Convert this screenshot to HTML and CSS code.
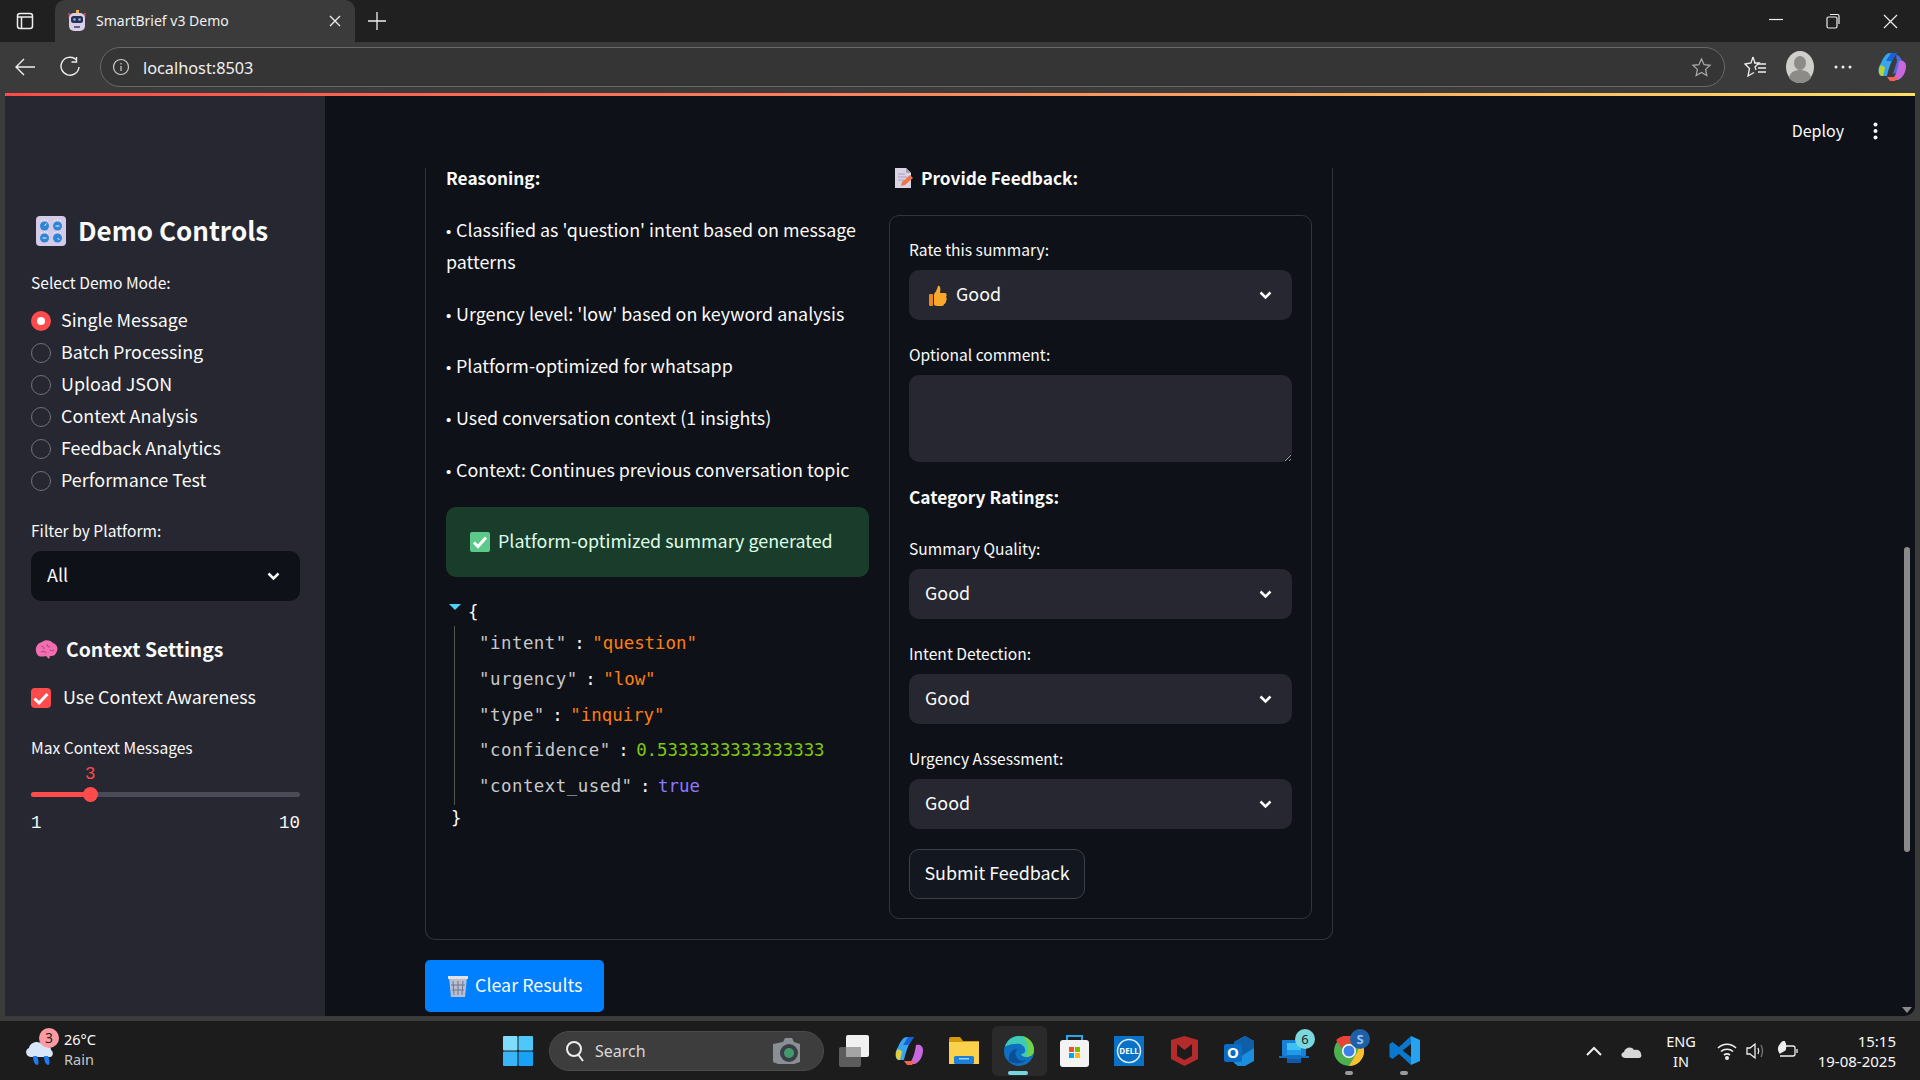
FILE: index.html
```html
<!doctype html>
<html lang="en">
<head>
    <meta charset="UTF-8">
    <title>SmartBrief v3 Demo</title>
    <link rel="stylesheet" href="styles.css">
</head>
<body>

<!-- browser tabs -->
<div class="tabstrip">
    <svg class="ic-panel" width="20" height="20" viewBox="0 0 20 20" fill="none" stroke="#eee" stroke-width="1.5"><rect x="2.5" y="2.5" width="15" height="15" rx="2.5"/><path d="M2.5 6h15M6.500 6v11.500"/></svg>
    <div class="tab">
        <svg width="20" height="22" viewBox="0 0 20 22"><path d="M9 0h3v3H9z" fill="#f2b632"/><path d="M2 3l1 6M18 3l-1 6" stroke="#c2455c" stroke-width="2"/><rect x="2" y="3" width="16" height="18" rx="5" fill="#d9cfe6"/><rect x="4" y="6" width="12" height="7" rx="2.500" fill="#2e2c55"/><circle cx="7.500" cy="9.500" r="1.300" fill="#63c7f5"/><circle cx="12.500" cy="9.500" r="1.300" fill="#63c7f5"/><rect x="7" y="16" width="6" height="2" fill="#6a5f8c"/></svg>
        <span class="tab-title">SmartBrief v3 Demo</span>
        <svg class="tab-close" width="12" height="12" viewBox="0 0 12 12" stroke="#eee" stroke-width="1.300"><path d="M1 1l10 10M11 1L1 11"/></svg>
    </div>
    <svg class="ic-plus" width="18" height="18" viewBox="0 0 18 18" stroke="#eee" stroke-width="1.300"><path d="M9 0v18M0 9h18"/></svg>
    <div class="win-btns">
        <svg width="14" height="14" viewBox="0 0 14 14" stroke="#eee" stroke-width="1.200"><path d="M0 5.500h14"/></svg>
        <svg width="14" height="16" viewBox="0 0 14 16" fill="none" stroke="#eee" stroke-width="1.200"><rect x="1" y="4" width="10" height="11" rx="1.500"/><path d="M4 1.500h7.500a1.500 1.500 0 0 1 1.500 1.500v8"/></svg>
        <svg width="15" height="15" viewBox="0 0 15 15" stroke="#eee" stroke-width="1.200"><path d="M1 1l13 13M14 1L1 14"/></svg>
    </div>
</div>

<!-- address bar -->
<div class="toolbar">
    <svg class="ic-back" width="22" height="20" viewBox="0 0 22 20" fill="none" stroke="#eee" stroke-width="1.400"><path d="M21 10H2M10 2l-8 8 8 8"/></svg>
    <svg class="ic-reload" width="22" height="22" viewBox="0 0 22 22" fill="none" stroke="#eee" stroke-width="1.400"><path d="M17 3.500A9 9 0 1 0 20 11M17.500 1v5h-5"/></svg>
    <div class="address">
        <svg width="18" height="18" viewBox="0 0 18 18" fill="none" stroke="#ccc" stroke-width="1.200"><circle cx="9" cy="9" r="7.500"/><path d="M9 8v5M9 5v1.500"/></svg>
        <span class="url">localhost:8503</span>
        <svg class="ic-star" width="21" height="21" viewBox="0 0 22 22" fill="none" stroke="#aaa" stroke-width="1.300"><path d="M11 2l2.700 6 6.300.700-4.700 4.300 1.300 6.500L11 16.200 5.400 19.500l1.300-6.500L2 8.700 8.300 8z"/></svg>
    </div>
    <div class="tool-icons">
        <svg width="22" height="24" viewBox="0 0 22 24" fill="none" stroke="#eee" stroke-width="1.300"><path d="M9 2l2 6h-1 5l-4 4 1 3M9 2L7 8 1 9l4.500 4.500L4 21l6-3.500"/><path d="M14 9h8M14 13h8M14 17h8"/></svg>
        <svg width="28" height="32" viewBox="0 0 28 32"><ellipse cx="14" cy="16" rx="14" ry="16" fill="#cfcec9"/><ellipse cx="14" cy="12" rx="6" ry="7" fill="#8c8b88"/><path d="M3 27c1-6 6-8 11-8s10 2 11 8c-3 4-7 5-11 5s-8-1-11-5z" fill="#8c8b88"/></svg>
        <svg width="18" height="4" viewBox="0 0 18 4" fill="#eee"><circle cx="2" cy="2" r="1.500"/><circle cx="9" cy="2" r="1.500"/><circle cx="16" cy="2" r="1.500"/></svg>
        <svg class="tool-copilot" width="28" height="30" viewBox="0 0 28 30"><path d="M12 1h7c-4 3-8 14-10 23H4C0 24-1 17 3 11c2-5 5-10 9-10z" fill="#38a5ee"/><path d="M2 14c2-1 4 0 5 2l-2 8H4c-3 0-4-6-2-10z" fill="#b8d433"/><path d="M13 1h6l-5 8H8z" fill="#1763d6"/><path d="M18 3c3 0 5 3 6 6l-4 11-5 2 4-13z" fill="#4a6de0"/><path d="M21 9c4-1 7 1 7 5 0 6-3 12-8 14h-6c4-4 6-12 7-19z" fill="#c768dd"/><path d="M9 25h11l-3 4h-5z" fill="#f2644e"/></svg>
    </div>
</div>

<div class="page">
    <div class="sidebar">
        <h2 class="side-title">
            <svg width="30" height="30" viewBox="0 0 30 30"><rect width="30" height="30" rx="4" fill="#d5cbe8"/><circle cx="8.500" cy="10" r="4.500" fill="#2f86d6"/><circle cx="21.500" cy="10" r="4.500" fill="#2f86d6"/><circle cx="8.500" cy="22" r="4.500" fill="#2f86d6"/><circle cx="21.500" cy="22" r="4.500" fill="#2f86d6"/><path d="M8.500 10l2-2.500M19.500 10h4M6.500 22h4M21.500 22l2 2M5 4l1 1M8.500 3v1.500M12 4l-1 1M18 4l1 1M21.500 3v1.500M25 4l-1 1M5 16l1 1M8.500 15v1.500M12 16l-1 1M18 16l1 1M21.500 15v1.500M25 16l-1 1" stroke="#e8f3ff" stroke-width="1"/></svg>
            <span class="txt-s">Demo Controls</span>
        </h2>
        <div class="side-label first">Select Demo Mode:</div>
        <div class="radios">
            <div class="radio on"><i></i><span class="txt">Single Message</span></div>
            <div class="radio"><i></i><span class="txt">Batch Processing</span></div>
            <div class="radio"><i></i><span class="txt">Upload JSON</span></div>
            <div class="radio"><i></i><span class="txt">Context Analysis</span></div>
            <div class="radio"><i></i><span class="txt">Feedback Analytics</span></div>
            <div class="radio"><i></i><span class="txt">Performance Test</span></div>
        </div>
        <div class="side-label filter">Filter by Platform:</div>
        <div class="select dark"><span class="txt">All</span>
            <svg class="chev" width="13" height="9" viewBox="0 0 13 9" fill="none" stroke="#fafafa" stroke-width="2.500"><path d="M1.500 1.500l5 5 5-5"/></svg>
        </div>
        <h3 class="side-sub">
            <svg width="23" height="21" viewBox="0 0 23 21"><path d="M2 14C-1 9 2 3 7 2c3-3 9-2 11 1 4 1 6 6 3 10-1 3-4 3-6 3l-1 3-3-3c-4 1-8 1-9-2z" fill="#f06fb0"/><path d="M6 6c2 0 3 1 3 3M12 4c0 2 1 3 3 3M6 12c2-1 4-1 5 1M15 10c1 1 3 1 4 0" fill="none" stroke="#c24a8d" stroke-width="1.200"/></svg>
            <span class="txt">Context Settings</span>
        </h3>
        <div class="check-row">
            <span class="check"><svg width="16" height="13" viewBox="0 0 16 13" fill="none" stroke="#fff" stroke-width="3"><path d="M1.500 6.500l4.500 4.500 8.500-9"/></svg></span>
            <span class="txt">Use Context Awareness</span>
        </div>
        <div class="side-label max">Max Context Messages</div>
        <div class="slider-val">3</div>
        <div class="slider">
            <div class="slider-fill" style="width:59px"></div>
            <div class="slider-thumb"></div>
        </div>
        <div class="slider-ticks"><span>1</span><span>10</span></div>
    </div>

    <div class="main">
        <div class="topbar">
            <span class="deploy">Deploy</span>
            <svg width="5" height="18" viewBox="0 0 5 18" fill="#fafafa"><circle cx="2.500" cy="2.500" r="2"/><circle cx="2.500" cy="9" r="2"/><circle cx="2.500" cy="15.500" r="2"/></svg>
        </div>

        <div class="result-card">
            <div class="col">
                <div class="col-head">Reasoning:</div>
                <p class="first"><span class="bul">•</span> Classified as 'question' intent based on message patterns</p>
                <p><span class="bul">•</span> Urgency level: 'low' based on keyword analysis</p>
                <p><span class="bul">•</span> Platform-optimized for whatsapp</p>
                <p><span class="bul">•</span> Used conversation context (1 insights)</p>
                <p><span class="bul">•</span> Context: Continues previous conversation topic</p>
                <div class="success">
                    <svg width="20" height="20" viewBox="0 0 20 20"><rect width="20" height="20" rx="2" fill="#5cc98a"/><path d="M4 10.500l4 4 8-9" fill="none" stroke="#fff" stroke-width="3"/></svg>
                    <span class="txt">Platform-optimized summary generated</span>
                </div>
                <div class="json">
                    <div class="json-open"><i class="tri"></i><span>{</span></div>
                    <div class="json-rows">
                        <div class="json-row"><span class="k">"intent"</span><span class="c">:</span><span class="s">"question"</span></div>
                        <div class="json-row"><span class="k">"urgency"</span><span class="c">:</span><span class="s">"low"</span></div>
                        <div class="json-row"><span class="k">"type"</span><span class="c">:</span><span class="s">"inquiry"</span></div>
                        <div class="json-row"><span class="k">"confidence"</span><span class="c">:</span><span class="n">0.5333333333333333</span></div>
                        <div class="json-row"><span class="k">"context_used"</span><span class="c">:</span><span class="b">true</span></div>
                    </div>
                    <div class="json-close">}</div>
                </div>
            </div>

            <div class="col">
                <div class="col-head feedback">
                    <svg width="18" height="20" viewBox="0 0 18 20"><path d="M0 0h11l5 5v15H0z" fill="#d9d3e3"/><path d="M11 0v5h5z" fill="#a99fb8"/><path d="M3 6h7M3 9h9M3 12h6" stroke="#a99fb8"/><path d="M6 18l1-4 8-7 3 3-8 7z" fill="#f2744e"/></svg>
                    Provide Feedback:
                </div>
                <div class="feedback-box">
                    <div class="field-label top">Rate this summary:</div>
                    <div class="select">
                        <svg class="thumb" width="18" height="21" viewBox="0 0 18 21"><path d="M5 9c2-2 3-5 4-8 2-1 3 2 2 7h5c2 0 2 3 1 4 1 1 1 3 0 4 0 2-1 3-2 3 0 1-1 2-2 2H8c-2 0-3-1-3-2z" fill="#f7a92c"/><rect y="9" width="4" height="12" rx="1" fill="#e8891c"/></svg>
                        <span class="txt">Good</span>
                        <svg class="chev" width="13" height="9" viewBox="0 0 13 9" fill="none" stroke="#fafafa" stroke-width="2.500"><path d="M1.500 1.500l5 5 5-5"/></svg>
                    </div>
                    <div class="field-label">Optional comment:</div>
                    <textarea class="comment"></textarea>
                    <div class="cat-head">Category Ratings:</div>
                    <div class="field-label cat">Summary Quality:</div>
                    <div class="select"><span class="txt">Good</span>
                        <svg class="chev" width="13" height="9" viewBox="0 0 13 9" fill="none" stroke="#fafafa" stroke-width="2.500"><path d="M1.500 1.500l5 5 5-5"/></svg>
                    </div>
                    <div class="field-label">Intent Detection:</div>
                    <div class="select"><span class="txt">Good</span>
                        <svg class="chev" width="13" height="9" viewBox="0 0 13 9" fill="none" stroke="#fafafa" stroke-width="2.500"><path d="M1.500 1.500l5 5 5-5"/></svg>
                    </div>
                    <div class="field-label">Urgency Assessment:</div>
                    <div class="select"><span class="txt">Good</span>
                        <svg class="chev" width="13" height="9" viewBox="0 0 13 9" fill="none" stroke="#fafafa" stroke-width="2.500"><path d="M1.500 1.500l5 5 5-5"/></svg>
                    </div>
                    <div class="submit">Submit Feedback</div>
                </div>
            </div>
        </div>

        <div class="clear-btn">
            <svg width="20" height="22" viewBox="0 0 20 22"><path d="M1 2h18l-2 20H3z" fill="#b9bfd0"/><path d="M0 1h20v3H0z" fill="#dfe2ea"/><path d="M5 6l1 14M10 6v14M15 6l-1 14M3 10h14M4 15h12" stroke="#6f7690"/></svg>
            <span class="txt">Clear Results</span>
        </div>

        <div class="scrollbar"></div>
        <i class="scroll-down"></i>
    </div>
</div>

<div class="window-edge"></div>

<!-- windows taskbar -->
<div class="taskbar">
    <div class="weather">
        <svg width="30" height="32" viewBox="0 0 30 32"><path d="M6 22c-5 0-7-7-2-9 1-6 9-8 13-4 5-1 9 2 9 6 3 2 2 7-1 7z" fill="#d8e6fa"/><path d="M8 21c0 5 2 9 4 9s2-4 0-9zM19 21c0 5 2 9 4 9s2-4 0-9z" fill="#1f7bf2"/></svg>
        <span class="weather-badge">3</span>
    </div>
    <div class="weather-text"><span>26°C</span><span class="dim">Rain</span></div>

    <svg class="win-logo" width="30" height="30" viewBox="0 0 30 30"><rect width="14.500" height="14.500" rx="1" fill="#7fdcfb"/><rect x="15.500" width="14.500" height="14.500" rx="1" fill="#4fc7f9"/><rect y="15.500" width="14.500" height="14.500" rx="1" fill="#3ab6f8"/><rect x="15.500" y="15.500" width="14.500" height="14.500" rx="1" fill="#17a2f5"/></svg>

    <div class="search">
        <svg width="20" height="22" viewBox="0 0 20 22" fill="none" stroke="#eee" stroke-width="2"><circle cx="9" cy="9" r="7"/><path d="M13.500 15l4.500 6"/></svg>
        <span>Search</span>
        <svg class="search-cam" width="29" height="28" viewBox="0 0 29 28"><path d="M1 7l10-2 2-4h7l2 4 6 2v18l-6 2H6l-5-2z" fill="#8a8f96"/><circle cx="17" cy="16" r="9" fill="#3a3f45"/><circle cx="17" cy="16" r="5" fill="#3f9a6e"/></svg>
    </div>

    <div class="apps">
        <div class="app"><svg width="30" height="32" viewBox="0 0 30 32"><rect y="12" width="22" height="20" rx="2" fill="#5c5c5c"/><rect x="7" width="23" height="22" rx="2" fill="#f1f1f1"/><rect x="7" y="12" width="15" height="10" fill="#a5a5a5"/></svg></div>
        <div class="app"><svg width="28" height="30" viewBox="0 0 28 30"><path d="M12 1h7c-4 3-8 14-10 23H4C0 24-1 17 3 11c2-5 5-10 9-10z" fill="#38a5ee"/><path d="M2 14c2-1 4 0 5 2l-2 8H4c-3 0-4-6-2-10z" fill="#e3cf33"/><path d="M13 1h6l-5 8H8z" fill="#1763d6"/><path d="M21 9c4-1 7 1 7 5 0 6-3 12-8 14h-6c4-4 6-12 7-19z" fill="#c768dd"/><path d="M9 25h11l-3 4h-5z" fill="#f2644e"/></svg></div>
        <div class="app"><svg width="30" height="27" viewBox="0 0 30 27"><path d="M0 2a2 2 0 0 1 2-2h9l3 4h16v5H0z" fill="#d49a0c"/><rect y="5" width="30" height="22" fill="#fbd04a"/><rect x="5" y="19" width="20" height="8" rx="1.500" fill="#1a80d9"/><rect x="10" y="21" width="10" height="1.500" fill="#9fd4fa"/></svg></div>
        <div class="app active">
            <svg width="30" height="30" viewBox="0 0 30 30"><circle cx="15" cy="15" r="15" fill="#0f6fc0"/><path d="M1 11C3 3 10 0 15 0c9 0 15 7 15 14 0 5-4 7-8 7-3 0-5-2-5-3 3 0 5-2 4-5-1-4-5-6-10-5-5 0-9 2-10 3z" fill="#3ecbb4"/><path d="M18 0c7 1 12 7 12 14 0 5-4 7-8 7 3-5 3-15-4-21z" fill="#6fd24a"/><path d="M5 25c6 4 15 2 17-1-5 2-9 0-10-4-1-2-1-5 2-7-6 0-10 4-9 12z" fill="#0b4f96"/></svg>
            <i class="app-bar"></i>
        </div>
        <div class="app"><svg width="29" height="32" viewBox="0 0 29 32"><path d="M7 6V1h15v5" fill="none" stroke="#2aa7e8" stroke-width="2"/><rect y="5" width="29" height="27" rx="3" fill="#f3f3f3"/><rect x="9" y="12" width="5" height="5" fill="#f25022"/><rect x="15" y="12" width="5" height="5" fill="#7fba00"/><rect x="9" y="18" width="5" height="5" fill="#00a4ef"/><rect x="15" y="18" width="5" height="5" fill="#ffb900"/></svg></div>
        <div class="app"><svg width="30" height="30" viewBox="0 0 30 30"><rect width="30" height="30" fill="#0a72c6"/><circle cx="15" cy="15" r="11.500" fill="none" stroke="#dcebf7" stroke-width="1.500"/><text x="15" y="18" class="dell">DELL</text></svg></div>
        <div class="app"><svg width="27" height="30" viewBox="0 0 27 30"><path d="M0 4l13.500-4L27 4v19l-13.500 7L0 23z" fill="#b52a2a"/><path d="M6 8v12l7.500 4 7.500-4V8l-7.500 6z" fill="#1c1c1c"/></svg></div>
        <div class="app"><svg width="30" height="30" viewBox="0 0 30 30"><path d="M10 6l11-6 9 5v20l-9 5H14l-4-3z" fill="#1a8fe0"/><path d="M30 5v7l-14 9-6-4V6l11-6z" fill="#0f5fa8"/><rect y="8" width="18" height="18" rx="2" fill="#0a6cc4"/><text x="9" y="22" class="outlook">O</text></svg></div>
        <div class="app">
            <svg width="30" height="26" viewBox="0 0 30 26"><rect x="3" y="2" width="24" height="16" rx="1" fill="#1781d8"/><rect x="8" y="5" width="14" height="7" fill="#3cc0f5"/><rect x="8" y="12" width="14" height="5" fill="#1f9be8"/><rect x="8" y="17" width="14" height="4" fill="#1670c0"/><rect x="8" y="21" width="14" height="4" fill="#0f5aa8"/><rect y="18" width="30" height="2" fill="#0f6fc0"/></svg>
            <span class="app-badge teal">6</span>
        </div>
        <div class="app">
            <svg width="30" height="30" viewBox="0 0 30 30"><circle cx="15" cy="15" r="15" fill="#4caf50"/><path d="M15 0a15 15 0 0 1 13 7.500H15a7.500 7.500 0 0 0-7 5L2 4A15 15 0 0 1 15 0z" fill="#ea4335"/><path d="M28 7.500A15 15 0 0 1 15 30l6.500-11a7.500 7.500 0 0 0 0-11.500z" fill="#fbc02d"/><circle cx="15" cy="15" r="7" fill="#fff"/><circle cx="15" cy="15" r="5.500" fill="#3f7fe8"/></svg>
            <span class="app-badge blue">S</span>
            <i class="app-dot"></i>
        </div>
        <div class="app">
            <svg width="31" height="31" viewBox="0 0 31 31"><path fill-rule="evenodd" d="M22 1L10 12 3.500 7 .5 9v13l3 2 6.500-5L22 30V22l-8.500-6.500L22 9z" fill="#0a78cc"/><path d="M22 1l9 4v21l-9 4z" fill="#25a3f0"/></svg>
            <i class="app-dot"></i>
        </div>
    </div>

    <div class="tray">
        <svg class="tray-chev" width="16" height="10" viewBox="0 0 16 10" fill="none" stroke="#eee" stroke-width="2"><path d="M1 9l7-7 7 7"/></svg>
        <svg class="tray-cloud" width="21" height="14" viewBox="0 0 21 14"><path d="M4 14c-4 0-5-5-1-6 1-5 8-6 10-2 4-1 7 1 7 4 1 2 0 4-2 4z" fill="#d8d8d8"/></svg>
        <div class="lang"><span>ENG</span><span>IN</span></div>
        <svg class="tray-wifi" width="20" height="18" viewBox="0 0 20 18" fill="none" stroke="#eee" stroke-width="1.600"><path d="M1 6c5-5 13-5 18 0M4 9.500c3-3 9-3 12 0M7 13c2-1.500 4-1.500 6 0"/><circle cx="10" cy="16" r="1.200" fill="#eee"/></svg>
        <svg class="tray-vol" width="20" height="20" viewBox="0 0 20 20" fill="none" stroke="#eee" stroke-width="1.300"><path d="M1 7h3l5-4v14l-5-4H1z"/><path d="M12 7c1 2 1 4 0 6" /><path d="M15 4c2 4 2 8 0 12" stroke="#777"/></svg>
        <svg class="tray-bat" width="21" height="20" viewBox="0 0 21 20" fill="none" stroke="#eee" stroke-width="1.300"><path d="M7 5h9a2 2 0 0 1 2 2v6a2 2 0 0 1-2 2H3"/><path d="M20 8v4"/><path d="M7 0C2 3 0 8 3 12l5-3C9 6 9 3 7 0z" fill="#eee"/></svg>
        <div class="clock"><span>15:15</span><span>19-08-2025</span></div>
    </div>
</div>

</body>
</html>
```

FILE: styles.css
```css
*{
    margin: 0;
    padding: 0;
    box-sizing: border-box;
}
html,body{
    width: 100%;
    height: 100%;
    overflow: hidden;
}
body{
    display: flex;
    flex-direction: column;
    background-color: #3b3b3b;
    color: #fafafa;
    font-family: "Noto Sans CJK SC", "Noto Sans", sans-serif;
    font-size: 17.900px;
}

/* the cjk font sits low in its box, lift the text next to icons */
.txt{
    margin-bottom: 4px;
}
.txt-s{
    margin-bottom: 2px;
}

/* browser chrome */
.tabstrip{
    height: 42px;
    flex: none;
    display: flex;
    align-items: center;
    background-color: #202020;
    font-family: "Noto Sans", "Liberation Sans", sans-serif;
}
.ic-panel{
    margin-left: 15px;
}
.tab{
    margin-left: 20px;
    width: 300px;
    height: 42px;
    display: flex;
    align-items: center;
    padding-left: 12px;
    background-color: #3b3b3b;
    border-radius: 10px 10px 0 0;
}
.tab-title{
    margin: -2px 0 0 9px;
    font-size: 14px;
    color: #f0f0f0;
}
.tab-close{
    margin-left: auto;
    margin-right: 14px;
}
.ic-plus{
    margin-left: 13px;
}
.win-btns{
    margin-left: auto;
    width: 151px;
    padding-right: 22px;
    display: flex;
    justify-content: space-between;
    align-items: center;
}
.toolbar{
    height: 51px;
    flex: none;
    display: flex;
    align-items: center;
    background-color: #3b3b3b;
    padding-bottom: 1px;
}
.ic-back{
    margin-left: 14px;
}
.ic-reload{
    margin-left: 23px;
}
.address{
    margin-left: 19px;
    width: 1625px;
    height: 40px;
    display: flex;
    align-items: center;
    padding-left: 11px;
    border: 1px solid #686868;
    border-radius: 20px;
    background-color: #353535;
}
.url{
    margin: 1px 0 0 13px;
    font-family: "Noto Sans", sans-serif;
    font-size: 16.300px;
    color: #f0f0f0;
}
.ic-star{
    margin-left: auto;
    margin-right: 12px;
}
.tool-icons{
    margin-left: 19px;
    flex: 1;
    display: flex;
    align-items: center;
    gap: 20px;
}
.tool-copilot{
    margin-left: 6px;
}
.page{
    flex: 1;
    min-height: 0;
    display: flex;
    margin: 0 5px;
    border-top: 3px solid;
    border-image: linear-gradient(90deg, #ff4b4b, #ff8a5c 50%, #ffe066) 1;
}

/* sidebar */
.sidebar{
    width: 320px;
    flex: none;
    padding: 115px 25px 0 26px;
    background-color: #262730;
}
.side-title{
    height: 40px;
    line-height: 40px;
    display: flex;
    align-items: center;
    gap: 12px;
    padding-left: 5px;
    font-size: 26px;
    font-weight: 700;
}
.side-label{
    height: 24px;
    line-height: 22px;
    font-size: 15.600px;
}
.side-label.first{
    margin-top: 20px;
}
.radios{
    margin-top: 10px;
}
.radio{
    height: 32px;
    display: flex;
    align-items: center;
    gap: 10px;
}
.radio i{
    width: 20px;
    height: 20px;
    border-radius: 50%;
    border: 1px solid #6f7078;
    background-color: #262730;
}
.radio.on i{
    border: 6px solid #ff4b4b;
    background-color: #fff;
}
.side-label.filter{
    margin-top: 22px;
}
.select{
    margin-top: 8px;
    height: 50px;
    display: flex;
    align-items: center;
    padding-left: 16px;
    border-radius: 10px;
    background-color: #262730;
}
.select.dark{
    background-color: #0e1117;
}
.chev{
    margin-left: auto;
    margin-right: 20px;
}
.side-sub{
    margin-top: 34px;
    height: 30px;
    display: flex;
    align-items: center;
    gap: 8px;
    padding-left: 4px;
    font-size: 19.400px;
    font-weight: 700;
}
.check-row{
    margin-top: 21px;
    height: 24px;
    display: flex;
    align-items: center;
    gap: 12px;
}
.check{
    width: 20px;
    height: 20px;
    display: flex;
    align-items: center;
    justify-content: center;
    border-radius: 4px;
    background-color: #ff4b4b;
}
.side-label.max{
    margin-top: 26px;
}
.slider-val{
    margin-top: 4px;
    padding-left: 54px;
    height: 20px;
    line-height: 20px;
    font-family: "Liberation Mono", monospace;
    font-size: 17.500px;
    color: #ff4b4b;
}
.slider{
    position: relative;
    margin-top: 8px;
    height: 5px;
    border-radius: 3px;
    background-color: #4a4b57;
}
.slider-fill{
    height: 5px;
    border-radius: 3px;
    background-color: #ff4b4b;
}
.slider-thumb{
    position: absolute;
    left: 52px;
    top: -5px;
    width: 15px;
    height: 15px;
    border-radius: 50%;
    background-color: #ff4b4b;
}
.slider-ticks{
    margin-top: 16px;
    display: flex;
    justify-content: space-between;
    height: 20px;
    line-height: 20px;
    font-family: "Liberation Mono", monospace;
    font-size: 17.500px;
}

/* main area */
.main{
    position: relative;
    flex: 1;
    background-color: #0e1117;
    border-radius: 0 0 10px 0;
}
.topbar{
    height: 72px;
    display: flex;
    align-items: center;
    justify-content: flex-end;
    padding: 0 37px 2px 0;
    gap: 29px;
}
.deploy{
    margin-bottom: 3px;
    font-size: 16px;
}
.result-card{
    margin-left: 100px;
    width: 908px;
    height: 772px;
    display: flex;
    gap: 20px;
    padding: 0 20px 20px;
    border: 1px solid #33353c;
    border-top: none;
    border-radius: 0 0 10px 10px;
}
.col{
    width: 423px;
    flex: none;
}
.col-head{
    height: 20px;
    line-height: 20px;
    font-size: 17.300px;
    font-weight: 700;
}
.col-head.feedback{
    display: flex;
    align-items: center;
    gap: 8px;
    padding-left: 6px;
}
.col p{
    margin-top: 20px;
    line-height: 32px;
}
.col p.first{
    margin-top: 25px;
}
.bul{
    display: inline-block;
    width: 6px;
    font-family: "Liberation Sans", sans-serif;
    font-size: 15px;
    line-height: 1;
}
.success{
    margin-top: 22px;
    height: 70px;
    display: flex;
    align-items: center;
    gap: 8px;
    padding-left: 24px;
    border-radius: 10px;
    background-color: #1a3d2b;
    color: #dffde9;
}

/* json viewer */
.json{
    margin-top: 21px;
    font-family: "DejaVu Sans Mono", "Liberation Mono", monospace;
    font-size: 17.400px;
}
.json-open{
    height: 28px;
    line-height: 28px;
    display: flex;
}
.tri{
    margin: 6px 0 0 3px;
    width: 0;
    height: 0;
    border-left: 6px solid transparent;
    border-right: 6px solid transparent;
    border-top: 6px solid #4fd2f5;
}
.json-open span{
    margin-left: 7px;
}
.json-rows{
    margin-left: 8px;
    padding-left: 24px;
    border-left: 1px solid #55544a;
}
.json-row{
    height: 35.750px;
    line-height: 35.750px;
    white-space: pre;
}
.k{
    letter-spacing: .5px;
    color: #c9c9c9;
}
.c{
    margin: 0 7.500px;
    color: #fafafa;
}
.s{
    color: #ff7f0e;
}
.n{
    color: #7ec80f;
}
.b{
    color: #8f78ff;
}
.json-close{
    height: 28px;
    line-height: 26px;
    padding-left: 5px;
}

/* feedback form */
.feedback-box{
    margin-top: 27px;
    height: 704px;
    padding: 0 19px;
    border: 1px solid #33353c;
    border-radius: 10px;
}
.field-label{
    margin-top: 23px;
    height: 24px;
    line-height: 22px;
    font-size: 15.600px;
}
.field-label.top{
    margin-top: 22px;
}
.field-label.cat{
    margin-top: 25px;
}
.thumb{
    margin-right: 9px;
    margin-left: 4px;
}
.comment{
    display: block;
    margin-top: 8px;
    width: 100%;
    height: 87px;
    border: none;
    border-radius: 10px;
    background-color: #262730;
    color-scheme: dark;
}
.cat-head{
    margin-top: 20px;
    height: 30px;
    line-height: 30px;
    font-size: 17.300px;
    font-weight: 700;
}
.submit{
    margin-top: 20px;
    width: 176px;
    height: 50px;
    line-height: 44px;
    text-align: center;
    border: 1px solid #3e4048;
    border-radius: 10px;
    background-color: #13171f;
}
.clear-btn{
    margin: 20px 0 0 100px;
    width: 179px;
    height: 52px;
    display: flex;
    align-items: center;
    gap: 7px;
    padding-left: 23px;
    border-radius: 5px;
    background-color: #007fff;
}
.scrollbar{
    position: absolute;
    right: 5px;
    top: 451px;
    width: 6px;
    height: 305px;
    border-radius: 3px;
    background-color: #8a8a8a;
}
.scroll-down{
    position: absolute;
    right: 3px;
    bottom: 3px;
    width: 0;
    height: 0;
    border-left: 5px solid transparent;
    border-right: 5px solid transparent;
    border-top: 6px solid #8a8a8a;
}
.window-edge{
    height: 5px;
    flex: none;
    background-color: #3b3b3b;
}

/* taskbar */
.taskbar{
    height: 59px;
    flex: none;
    display: flex;
    align-items: center;
    background-color: #1c1c1c;
    font-family: "Noto Sans", "Liberation Sans", sans-serif;
}
.weather{
    position: relative;
    margin-left: 25px;
    width: 30px;
    height: 32px;
}
.weather-badge{
    position: absolute;
    left: 14px;
    top: -7px;
    width: 20px;
    height: 20px;
    line-height: 20px;
    text-align: center;
    border-radius: 50%;
    background-color: #ff9aa2;
    color: #222;
    font-size: 14px;
}
.weather-text{
    margin: -4px 0 0 9px;
    display: flex;
    flex-direction: column;
    line-height: 20px;
    font-size: 14.500px;
}
.dim{
    color: #c8c8c8;
}
.win-logo{
    margin-left: 407px;
}
.search{
    margin-left: 16px;
    width: 275px;
    height: 40px;
    display: flex;
    align-items: center;
    padding-left: 15px;
    border: 1px solid #4a4a4a;
    border-radius: 20px;
    background-color: #3d3d3d;
    font-size: 16px;
    color: #d8d8d8;
}
.search span{
    margin-left: 10px;
}
.search-cam{
    margin-left: auto;
    margin-right: 22px;
}
.apps{
    margin-left: 3px;
    display: flex;
}
.app{
    position: relative;
    width: 55px;
    height: 50px;
    display: flex;
    align-items: center;
    justify-content: center;
}
.app.active{
    border-radius: 6px;
    background-color: #2a2a2a;
}
.app-bar{
    position: absolute;
    bottom: 1px;
    left: 16px;
    width: 20px;
    height: 4px;
    border-radius: 2px;
    background-color: #76d6e0;
}
.app-dot{
    position: absolute;
    bottom: 1px;
    left: 23px;
    width: 8px;
    height: 4px;
    border-radius: 2px;
    background-color: #9a9a9a;
}
.app-badge{
    position: absolute;
    top: 3px;
    right: 7px;
    width: 20px;
    height: 20px;
    line-height: 20px;
    text-align: center;
    border-radius: 50%;
    color: #222;
    font-size: 13px;
}
.app-badge.teal{
    background-color: #7ad7dc;
}
.app-badge.blue{
    background-color: #1f5fa8;
    color: #9cc4ef;
    font-weight: 700;
}
.dell{
    fill: #fff;
    font-size: 8px;
    font-weight: 700;
    text-anchor: middle;
}
.outlook{
    fill: #fff;
    font-size: 15px;
    font-weight: 700;
    text-anchor: middle;
}
.tray{
    flex: 1;
    display: flex;
    align-items: center;
    padding-right: 24px;
}
.tray-chev{
    margin-left: 154px;
}
.tray-cloud{
    margin-left: 19px;
}
.lang{
    margin-left: 19px;
    width: 40px;
    display: flex;
    flex-direction: column;
    align-items: center;
    line-height: 20px;
    font-size: 14.500px;
}
.tray-wifi{
    margin-left: 16px;
}
.tray-vol{
    margin-left: 9px;
}
.tray-bat{
    margin-left: 11px;
}
.clock{
    margin-left: auto;
    display: flex;
    flex-direction: column;
    align-items: flex-end;
    line-height: 20px;
    font-size: 15px;
}
```
